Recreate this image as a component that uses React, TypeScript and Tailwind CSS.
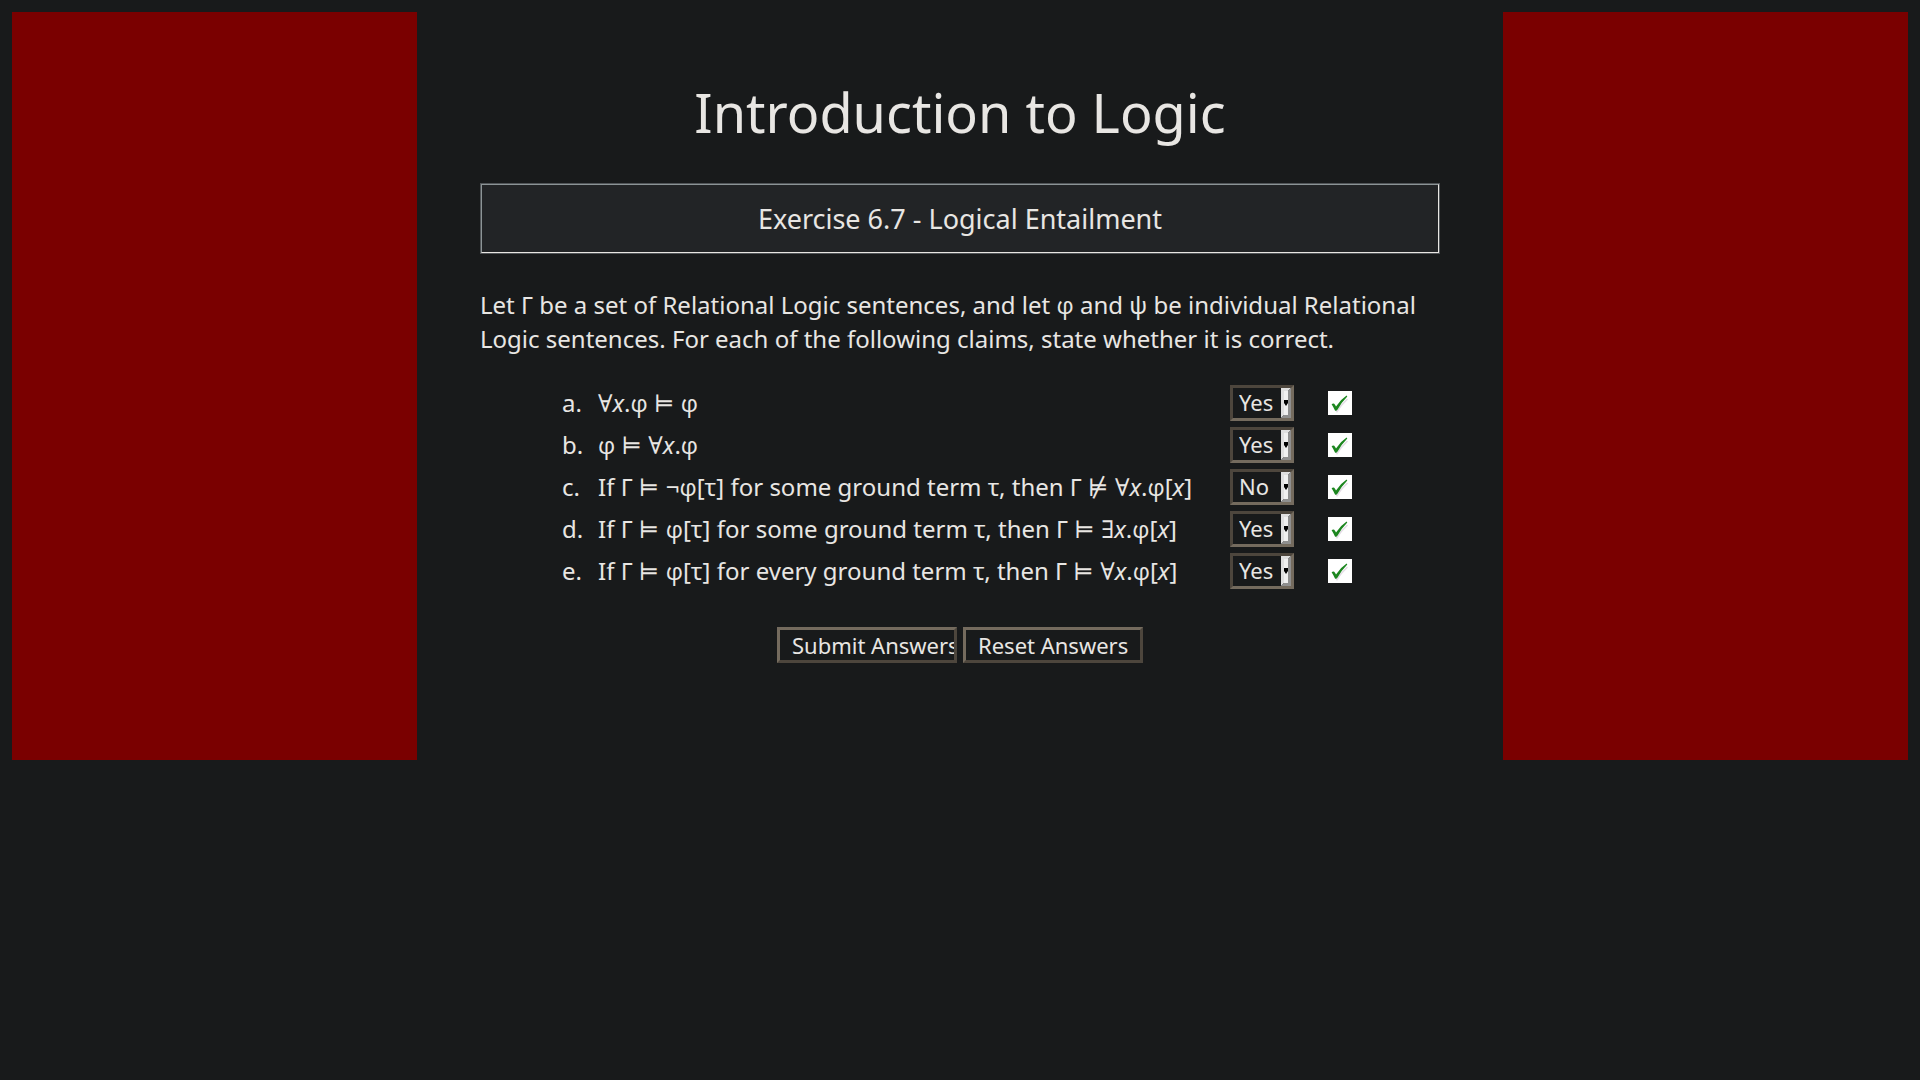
import { ReactNode, useState } from "react";

type Answer = "Yes" | "No";

const X = () => <i>x</i>;
const Phi = () => <span className="font-['Open_Sans',sans-serif]">φ</span>;

const claims: { id: string; text: ReactNode; answer: Answer }[] = [
  { id: "a", text: <>∀<X />.<Phi /> ⊨ <Phi /></>, answer: "Yes" },
  { id: "b", text: <><Phi /> ⊨ ∀<X />.<Phi /></>, answer: "Yes" },
  { id: "c", text: <>If Γ ⊨ ¬<Phi />[τ] for some ground term τ, then Γ ⊭ ∀<X />.<Phi />[<X />]</>, answer: "No" },
  { id: "d", text: <>If Γ ⊨ <Phi />[τ] for some ground term τ, then Γ ⊨ ∃<X />.<Phi />[<X />]</>, answer: "Yes" },
  { id: "e", text: <>If Γ ⊨ <Phi />[τ] for every ground term τ, then Γ ⊨ ∀<X />.<Phi />[<X />]</>, answer: "Yes" },
];

function CheckMark() {
  return (
    <svg viewBox="0 0 24 24" className="block size-6 bg-white" role="img" aria-label="Correct">
      <path d="M6.5 16 L9 20.5 Q13 14 19.5 8" fill="none" stroke="#e4dde6" strokeWidth="1.6" />
      <path d="M3.6 13.3 Q5 11.9 6.2 12.7 Q7.3 13.8 8 15.6 Q12 9 18.6 4.6 L19.3 5.6 Q13.2 11.8 9.6 18.6 Q8.2 20.3 7 19.6 Q5.4 16 3.6 13.3 Z" fill="#1c861f" />
    </svg>
  );
}

function AnswerSelect({ id, initial }: { id: string; initial: Answer }) {
  const [value, setValue] = useState<Answer>(initial);
  return (
    <div className="relative h-9 w-16">
      <select
        aria-labelledby={`claim-${id}`}
        value={value}
        onChange={(e) => setValue(e.target.value as Answer)}
        className="block h-full w-full appearance-none border-3 border-t-[#4d463d] border-r-[#746b5e] border-b-[#746b5e] border-l-[#4d463d] bg-[#181a1b] pb-0.5 pl-1.5 text-[22px] leading-[28px] text-[#e8e6e3]"
      >
        <option>Yes</option>
        <option>No</option>
      </select>
      <svg viewBox="0 0 10 30" className="pointer-events-none absolute top-[3px] right-[3px] h-[30px] w-2.5" aria-hidden="true">
        <path d="M0 0H10L7 3H3V27L0 30Z" fill="#dfdfdf" />
        <path d="M10 0V30H0L3 27H7V3Z" fill="#8f8f8f" />
        <path d="M3 3H7V27H3Z" fill="#f0f0f0" />
        <path d="M3 12H7V15L5 18L3 15Z" fill="#000" />
      </svg>
    </div>
  );
}

const buttonClass =
  "h-9 w-[180px] overflow-hidden border-3 border-t-[#746b5e] border-r-[#4d463d] border-b-[#4d463d] border-l-[#746b5e] bg-[#181a1b] pl-3 text-left text-[22px] leading-[30px] whitespace-nowrap";

export default function App() {
  return (
    <div className="min-h-screen bg-[#181a1b] p-3 font-['Noto_Sans','DejaVu_Serif',sans-serif] text-2xl text-[#e8e6e3]">
      <div className="flex">
        <aside className="min-h-[748px] flex-1 bg-[#7a0000]" />
        <main className="w-[1086px] px-[63px] pt-[63px] leading-[34px]">
          <h1 className="text-center text-[54px] leading-[74px]">Introduction to Logic</h1>
          <h2 className="mt-[34px] border border-[#515558] text-center text-[27px]">
            <span className="block border border-t-[#8c9496] border-r-[#e8e6e3] border-b-[#e8e6e3] border-l-[#8c9496] bg-[#222426] py-3.5 leading-[39px]">
              Exercise 6.7 - Logical Entailment
            </span>
          </h2>
          <p className="mt-[34px]">
            Let Γ be a set of Relational Logic sentences, and let <Phi /> and ψ be individual Relational
            Logic sentences. For each of the following claims, state whether it is correct.
          </p>
          <table className="mt-[26px] ml-[82px]">
            <tbody>
              {claims.map((claim) => (
                <tr key={claim.id} className="h-[42px]">
                  <td className="w-9 p-0">{claim.id}.</td>
                  <td id={`claim-${claim.id}`} className="w-[632px] p-0 whitespace-nowrap">{claim.text}</td>
                  <td className="w-[98px] p-0">
                    <AnswerSelect id={claim.id} initial={claim.answer} />
                  </td>
                  <td className="p-0"><CheckMark /></td>
                </tr>
              ))}
            </tbody>
          </table>
          <div className="mt-[35px] flex justify-center gap-1.5">
            <button type="button" className={buttonClass}>Submit Answers</button>
            <button type="button" className={buttonClass}>Reset Answers</button>
          </div>
        </main>
        <aside className="min-h-[748px] flex-1 bg-[#7a0000]" />
      </div>
    </div>
  );
}
